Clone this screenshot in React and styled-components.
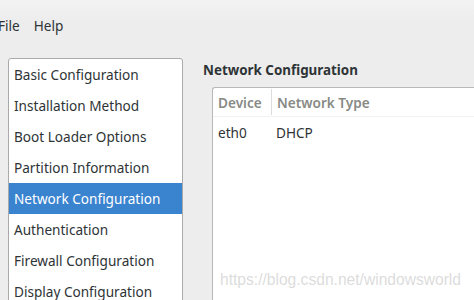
import React from "react";
import styled, { createGlobalStyle } from "styled-components";

const GlobalStyle = createGlobalStyle`
  body {
    margin: 0;
    background: #ededed;
    overflow: hidden;
  }
`;

const Window = styled.div`
  position: relative;
  width: 474px;
  height: 300px;
  overflow: hidden;
  background: linear-gradient(#f3f3f3, #ededed 20px, #ededed);
  font-family: "Noto Sans", "DejaVu Sans", sans-serif;
  font-size: 13.6px;
  color: #2e3436;
`;

const MenuBar = styled.div`
  display: flex;
  gap: 14px;
  height: 50px;
  align-items: center;
  margin-left: -2px;
`;

const MenuItem = styled.span`
  font-size: 13.6px;
`;

const Body = styled.div`
  display: flex;
  gap: 20px;
  padding: 8px 0 0 8px;
`;

const Sidebar = styled.div`
  width: 173px;
  flex: none;
  background: #fff;
  border: 1px solid #aaa;
  border-radius: 3px 3px 0 0;
  height: 260px;
`;

const SideItem = styled.div`
  height: 31px;
  display: flex;
  align-items: center;
  padding-left: 5px;
  white-space: nowrap;
  background: ${(p) => (p.$active ? "#3a83cf" : "transparent")};
  color: ${(p) => (p.$active ? "#fff" : "#2e3436")};
`;

const Panel = styled.div`
  display: flex;
  flex-direction: column;
  padding-top: 3px;
`;

const Heading = styled.div`
  font-weight: bold;
  font-size: 13.4px;
  height: 26px;
  white-space: nowrap;
`;

const Table = styled.div`
  margin-left: 9px;
  width: 300px;
  height: 220px;
  background: #fff;
  border: 1px solid #b8b8b8;
  border-right: none;
  border-radius: 3px 0 0 0;
`;

const HeaderRow = styled.div`
  display: flex;
  height: 28px;
  border-bottom: 1px solid #f2f2f2;
`;

const HeaderCell = styled.div`
  display: flex;
  align-items: center;
  padding-left: 5px;
  width: ${(p) => p.$w || "auto"};
  color: #888a85;
  font-weight: 600;
  white-space: nowrap;
  border-right: ${(p) => (p.$sep ? "1px solid #dcdcdc" : "none")};
  margin: 1px 0;
`;

const Row = styled.div`
  display: flex;
  height: 31px;
  align-items: center;
`;

const Cell = styled.div`
  padding-left: 5px;
  width: ${(p) => p.$w || "auto"};
`;

const Watermark = styled.div`
  position: absolute;
  left: 220px;
  top: 271px;
  font-family: "Liberation Sans", Arial, sans-serif;
  font-size: 15.6px;
  white-space: nowrap;
  color: rgba(190, 190, 190, 0.55);
`;

const items = [
  "Basic Configuration",
  "Installation Method",
  "Boot Loader Options",
  "Partition Information",
  "Network Configuration",
  "Authentication",
  "Firewall Configuration",
  "Display Configuration",
];

export default function App() {
  return (
    <Window>
      <GlobalStyle />
      <MenuBar>
        <MenuItem>File</MenuItem>
        <MenuItem>Help</MenuItem>
      </MenuBar>
      <Body>
        <Sidebar>
          {items.map((it) => (
            <SideItem key={it} $active={it === "Network Configuration"}>
              {it}
            </SideItem>
          ))}
        </Sidebar>
        <Panel>
          <Heading>Network Configuration</Heading>
          <Table>
            <HeaderRow>
              <HeaderCell $w="53px" $sep>Device</HeaderCell>
              <HeaderCell>Network Type</HeaderCell>
            </HeaderRow>
            <Row>
              <Cell $w="53px">eth0</Cell>
              <Cell>DHCP</Cell>
            </Row>
          </Table>
        </Panel>
      </Body>
      <Watermark>https://blog.csdn.net/windowsworld</Watermark>
    </Window>
  );
}
